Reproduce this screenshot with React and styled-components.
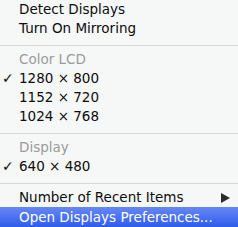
import React from 'react';
import { styled, createGlobalStyle } from 'styled-components';

const GlobalStyle = createGlobalStyle`
  html, body {
    margin: 0;
    padding: 0;
    background: #f6f7f7;
  }
`;

const items = [
  { type: 'item', label: 'Detect Displays' },
  { type: 'item', label: 'Turn On Mirroring' },
  { type: 'sep' },
  { type: 'header', label: 'Color LCD' },
  { type: 'item', label: '1280 × 800', checked: true },
  { type: 'item', label: '1152 × 720' },
  { type: 'item', label: '1024 × 768' },
  { type: 'sep' },
  { type: 'header', label: 'Display' },
  { type: 'item', label: '640 × 480', checked: true },
  { type: 'sep' },
  { type: 'item', label: 'Number of Recent Items', submenu: true },
  { type: 'item', label: 'Open Displays Preferences...', active: true },
];

const App = () => {
  return (
    <>
      <GlobalStyle />
      <Menu>
        {items.map((it, i) => {
          if (it.type === 'sep') return <Separator key={i} />;
          return (
            <Row key={i} $header={it.type === 'header'} $active={it.active}>
              <Check>{it.checked ? '✓' : ''}</Check>
              <Label>{it.label}</Label>
              {it.submenu && (
                <Arrow width="9" height="10" viewBox="0 0 9 10">
                  <polygon points="0,0 9,5 0,10" fill="#2b2b2b" />
                </Arrow>
              )}
            </Row>
          );
        })}
      </Menu>
    </>
  );
};

export default App;

const Menu = styled.div`
  display: flex;
  flex-direction: column;
  width: 238px;
  height: 227px;
  overflow: hidden;
  background: #f6f7f7;
  font-family: "DejaVu Sans", "Liberation Sans", sans-serif;
  font-size: 13.5px;
`;

const Row = styled.div`
  display: flex;
  align-items: center;
  height: ${p => (p.$active ? '20px' : '19px')};
  line-height: 19px;
  padding-right: 8px;
  color: ${p => (p.$header ? '#9b9b9b' : p.$active ? '#ffffff' : '#0d0d0d')};
  background: ${p => (p.$active ? 'linear-gradient(#6787f4, #2f5deb)' : 'transparent')};
  flex-shrink: 0;
`;

const Check = styled.span`
  width: 19px;
  padding-left: 2px;
  box-sizing: border-box;
  font-size: 14px;
  color: #111;
`;

const Label = styled.span`
  flex: 1;
  white-space: nowrap;
`;

const Arrow = styled.svg`
  display: block;
`;

const Separator = styled.div`
  flex-shrink: 0;
  height: 1px;
  margin: 7px 0 4px;
  background: #d9d9d9;
`;
